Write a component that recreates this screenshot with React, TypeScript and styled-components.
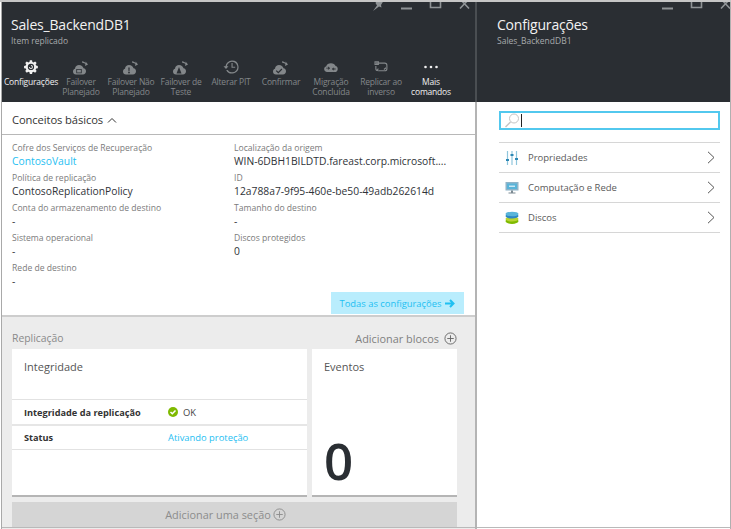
import React from "react";
import styled, { createGlobalStyle } from "styled-components";

const Global = createGlobalStyle`
  html, body { margin: 0; padding: 0; background: #fff; }
  body { font-family: "Open Sans", "Noto Sans", sans-serif; overflow: hidden; }
`;

const Page = styled.div`
  width: 731px; height: 529px; display: flex; position: relative; overflow: hidden;
  background: #fff;
`;
const TopLine = styled.div`
  position: absolute; left: 0; right: 0; top: 0; height: 2px; background: #c6c6c6;
`;
const Blade = styled.section<{ $w: number }>`
  width: ${p => p.$w}px; flex: none; height: 529px; display: flex; flex-direction: column;
  position: relative; box-sizing: border-box;
`;
const LeftBlade = styled(Blade)`
  margin-left: 1px; border-left: 1px solid #a9a9a9; border-right: 2px solid #b4b4b4;
`;
const RightBlade = styled(Blade)`
  border-right: 1px solid #b0b0b0;
`;
const Header = styled.header<{ $edge?: boolean }>`
  height: 102px; flex: none; background: #2a2e33; color: #fff; box-sizing: border-box;
  padding-top: 16px; position: relative;
  ${p => p.$edge && "margin-right: -2px; border-right: 2px solid #4a4e52;"}
`;
const Title = styled.h1<{ $l: number }>`
  margin: 0 0 0 ${p => p.$l}px; font-size: 14px; line-height: 18px; font-weight: 400; color: #f2f2f2;
  letter-spacing: -0.2px;
`;
const Sub = styled.div<{ $l: number }>`
  margin: 1px 0 0 ${p => p.$l}px; font-size: 8.5px; line-height: 12px; color: #a7aaac;
`;
const Commands = styled.div`
  display: grid; grid-template-columns: repeat(9, 50px); margin: 11px 0 0 4px;
`;
const Cmd = styled.div<{ $on?: boolean }>`
  display: flex; flex-direction: column; align-items: center;
  color: ${p => (p.$on ? "#f0f0f0" : "#83878a")};
  font-size: 8.5px; line-height: 10px; letter-spacing: -0.2px; text-align: center; white-space: nowrap;
`;
const CmdIcon = styled.svg`
  width: 18px; height: 18px; display: block; margin-bottom: 1px; fill: currentColor;
`;
const WinButtons = styled.div<{ $r: number }>`
  position: absolute; top: 0; right: ${p => p.$r}px; display: flex; gap: 14px; align-items: flex-start;
  color: #8f9396;
`;
const WinIcon = styled.svg`
  display: block; width: 15px; height: 12px; fill: none; stroke: currentColor; stroke-width: 1.6;
`;

const Basics = styled.div`
  height: 33px; flex: none; box-sizing: border-box; border-bottom: 1px solid #b8b8b8;
  padding: 10px 0 0 10px; font-size: 11.2px; line-height: 16px; color: #333; letter-spacing: -0.1px;
  display: flex; align-items: flex-start; gap: 4px;
`;
const Info = styled.div`
  display: grid; grid-template-columns: 222px 1fr; grid-auto-rows: 30px; padding: 6px 0 0 10px; height: 150px;
  box-sizing: border-box;
`;
const Field = styled.div`
  min-width: 0;
`;
const Label = styled.div`
  font-size: 8.6px; line-height: 14px; color: #7b7b7b; white-space: nowrap;
`;
const Value = styled.div<{ $link?: boolean }>`
  margin-top: -1px;
  font-size: 10.3px; line-height: 14px; color: ${p => (p.$link ? "#1fc0f2" : "#2f3338")}; white-space: nowrap;
`;
const AllRow = styled.div`
  display: flex; justify-content: flex-end; padding: 0 11px 0 0; height: 23px; flex: none;
  border-bottom: 2px solid #cdcdcd; margin-top: 7px;
`;
const AllBtn = styled.div`
  width: 133px; height: 22px; background: #b9edfd; color: #1fc0f2; font-size: 9.4px;
  display: flex; align-items: center; justify-content: center; gap: 4px; white-space: nowrap;
`;
const Lower = styled.div`
  flex: 1; background: #ececec; padding: 0 18px 0 10px; display: flex; flex-direction: column; min-height: 0;
`;
const LowerHead = styled.div`
  height: 32px; flex: none; display: flex; align-items: center; justify-content: space-between;
  padding-top: 10px; box-sizing: border-box;
`;
const SectionName = styled.span`
  font-size: 10.4px; color: #8a8a8a;
`;
const AddLink = styled.span`
  font-size: 10.9px; color: #7f7f7f; display: flex; align-items: center; gap: 5px;
`;
const Cards = styled.div`
  display: grid; grid-template-columns: 295px 145px; gap: 5px; height: 148px; flex: none;
`;
const Card = styled.div`
  background: #fff; border-bottom: 2px solid #b5b5b5; box-sizing: border-box; position: relative;
  display: flex; flex-direction: column;
`;
const CardTitle = styled.div<{ $l: number }>`
  height: 50px; box-sizing: border-box; padding: 9px 0 0 ${p => p.$l}px; font-size: 11px; line-height: 18px; color: #555;
  flex: none;
`;
const HealthRow = styled.div`
  display: grid; grid-template-columns: 144px 1fr; align-items: center; height: 24px; padding-left: 12px;
  border-top: 1px solid #e2e2e2; font-size: 9.2px; color: #333;
  & + & { border-top: 2px solid #e6e6e6; height: 23px; }
  &:last-of-type { border-bottom: 1px solid #e2e2e2; }
`;
const RowKey = styled.b`
  font-weight: 700;
`;
const RowVal = styled.span<{ $link?: boolean }>`
  display: flex; align-items: center; gap: 5px; font-size: 9.4px; color: ${p => (p.$link ? "#1fc0f2" : "#444")};
`;
const BigZero = styled.div`
  position: absolute; left: 12px; bottom: 5px; font-size: 51px; line-height: 60px; color: #2a2e33; font-weight: 600;
`;
const AddSection = styled.div`
  margin-top: 5px; height: 25px; flex: none; background: #d5d5d5; color: #8c8c8c; font-size: 10.9px;
  display: flex; align-items: center; justify-content: center; gap: 2px; padding-right: 18px;
`;
const BottomLine = styled.div`
  position: absolute; left: 0; right: 0; bottom: 1px; height: 1px; background: #b9b9b9;
`;

const Search = styled.div`
  margin: 9px 10px 0 22px; height: 19px; box-sizing: border-box; border: 2px solid #52c8ee;
  display: flex; align-items: center; padding-left: 3px; gap: 1px;
`;
const Caret = styled.i`
  display: block; width: 1px; height: 13px; background: #222;
`;
const List = styled.div`
  margin: 12px 10px 0 22px; border-top: 1px solid #d6d6d6;
`;
const Item = styled.div`
  height: 30px; box-sizing: border-box; border-bottom: 1px solid #d6d6d6; display: flex; align-items: center;
  padding: 0 5px 0 6px; font-size: 9.5px; color: #5a5a5a;
`;
const ItemIcon = styled.svg`
  width: 14px; height: 14px; flex: none; margin-right: 9px;
`;
const ItemText = styled.span`
  flex: 1;
`;

const Chevron = () => (
  <svg width="8" height="13" viewBox="0 0 8 13" fill="none" stroke="#555" strokeWidth="1">
    <path d="M1 .8 7 6.500 1 12.200" />
  </svg>
);
const Plus = ({ s, c }: { s: number; c: string }) => (
  <svg width={s} height={s} viewBox="0 0 14 14" fill="none" stroke={c} strokeWidth="1">
    <circle cx="7" cy="7" r="6" />
    <path d="M3.500 7h7M7 3.500v7" />
  </svg>
);

const arrow = "M10 3.200c1.800.2 3 .8 3.600 2V3.500l2.400 2.900-3 1.500.4-1.600c-.8-1-1.800-1.400-3.200-1.500z";
const cloud = "M4 16.500c-1.800 0-3-1.300-3-3 0-1.400.8-2.500 2-2.800C3.200 8.300 5 7 7 7c2.300 0 4 1.300 4.500 3.200 1.500.1 2.500 1.300 2.500 3 0 1.800-1.300 3.300-3 3.300z";

const icons: React.ReactNode[] = [
  <g key="g" transform="translate(1.300 1.300) scale(.85)">
    <path fillRule="evenodd" d="M7.700 1h2.600l.4 2.100 1.300.6L13.900 2.500l1.800 1.800-1.200 1.800.6 1.300 2 .4v2.600l-2 .4-.6 1.300 1.200 1.800-1.800 1.800-1.900-1.200-1.300.6-.4 2.100H7.700l-.4-2.100-1.300-.6-1.900 1.200-1.800-1.800 1.200-1.800-.6-1.300-2-.4V7.800l2-.4.6-1.300-1.200-1.800 1.800-1.800L6 3.700l1.300-.6zM9 5.300a3.700 3.700 0 1 0 0 7.400 3.700 3.700 0 0 0 0-7.400z" />
    <path d="M9 6.700a2.300 2.300 0 1 1-2.300 2.300h1.100A1.200 1.200 0 1 0 9 7.800z" />
  </g>,
  <g key="a">
    <path d={arrow} />
    <path fillRule="evenodd" d={cloud + "M4.300 10.900h5.400v4.400H4.300zM5.100 11.700h3.800v2.800H5.100z"} />
  </g>,
  <g key="b">
    <path d={arrow} />
    <path fillRule="evenodd" d={cloud + "M6.300 9.500 6.500 13h1l.2-3.500zM7 13.600a.9.900 0 1 0 0 1.800.9.900 0 0 0 0-1.800z"} />
  </g>,
  <g key="c">
    <path d={arrow} />
    <path fillRule="evenodd" d={cloud + "M7 9 4.500 15.500h5z"} />
  </g>,
  <g key="d">
    <path fillRule="evenodd" d="M10 2.500a6.500 6.500 0 1 1-5.800 9.400h1.400A5.300 5.300 0 1 0 4.800 8.300h1.700L4 11 1.500 8.300h2A6.500 6.500 0 0 1 10 2.500zM9.500 5h1.100v3.700h2.600v1.100H9.500z" />
  </g>,
  <g key="e">
    <path d={arrow} />
    <path fillRule="evenodd" d={cloud + "M4.600 12.300l-.8.800L6.300 15.400l4-4-.8-.8-3.200 3.200z"} />
  </g>,
  <g key="f" transform="translate(1.300 1.300) scale(.85)">
    <path fillRule="evenodd" d="M4.500 15C2.500 15 1 13.500 1 11.500 1 9.900 2 8.600 3.500 8.200 4 6 6.200 4.500 9 4.500c2.700 0 4.800 1.400 5.500 3.500C16 8.300 17 9.700 17 11.300c0 2-1.500 3.700-3.500 3.700zM3.500 10l2.600 0-1-1.100H6.300L8 10.500 6.300 12H5.100l1-1.100H3.500zM14.500 10.900h-2.600l1-1H11.700L10 11.500 11.700 13h1.200l-1-1.100h2.600z" />
  </g>,
  <g key="h" fill="none" stroke="currentColor" strokeWidth="1.300" transform="translate(1.300 1.300) scale(.85)">
    <path d="M3 4.500h10.500c1.500 0 2.500 1 2.500 2.500v4c0 1.500-1 2.500-2.500 2.500H6" />
    <path d="M2 3h4v3H2zM3 8v3.500c0 1 1 2 3 2" />
    <path d="M12.500 12 15 10M6 11l-2 2.500" />
  </g>,
  <g key="m">
    <circle cx="3.500" cy="9" r="1.300" />
    <circle cx="9" cy="9" r="1.300" />
    <circle cx="14.500" cy="9" r="1.300" />
  </g>,
];

const commands: { lines: string[]; on?: boolean }[] = [
  { lines: ["Configurações"], on: true },
  { lines: ["Failover", "Planejado"] },
  { lines: ["Failover Não", "Planejado"] },
  { lines: ["Failover de", "Teste"] },
  { lines: ["Alterar PIT"] },
  { lines: ["Confirmar"] },
  { lines: ["Migração", "Concluída"] },
  { lines: ["Replicar ao", "inverso"] },
  { lines: ["Mais", "comandos"], on: true },
];

const fields: [string, string, boolean?][] = [
  ["Cofre dos Serviços de Recuperação", "ContosoVault", true],
  ["Localização da origem", "WIN-6DBH1BILDTD.fareast.corp.microsoft...."],
  ["Política de replicação", "ContosoReplicationPolicy"],
  ["ID", "12a788a7-9f95-460e-be50-49adb262614d"],
  ["Conta do armazenamento de destino", "-"],
  ["Tamanho do destino", "-"],
  ["Sistema operacional", "-"],
  ["Discos protegidos", "0"],
  ["Rede de destino", "-"],
];

const WindowIcons = ({ pin, right }: { pin?: boolean; right: number }) => (
  <WinButtons $r={right}>
    {pin && (
      <WinIcon viewBox="0 0 15 12" style={{ fill: "currentColor", stroke: "none" }}>
        <path d="M7 0h7L11 5l.5 2.500-2.500-1L3 11l4-5.500-1.500-2.500z" />
      </WinIcon>
    )}
    <WinIcon viewBox="0 0 15 12"><path d="M2 8.500h11" strokeWidth="2" /></WinIcon>
    <WinIcon viewBox="0 0 15 12"><path d="M2.500-2v9.500h10V-2" /></WinIcon>
    <WinIcon viewBox="0 0 15 12"><path d="M3-1 12 8.500M12-1 3 8.500" /></WinIcon>
  </WinButtons>
);

export default function App() {
  return (
    <Page>
      <Global />
      <LeftBlade $w={476}>
        <Header $edge>
          <Title $l={9}>Sales_BackendDB1</Title>
          <Sub $l={9}>Item replicado</Sub>
          <Commands>
            {commands.map((c, i) => (
              <Cmd key={i} $on={c.on}>
                <CmdIcon viewBox="0 0 18 18">{icons[i]}</CmdIcon>
                {c.lines.map(l => <span key={l}>{l}</span>)}
              </Cmd>
            ))}
          </Commands>
          <WindowIcons pin right={3} />
        </Header>
        <Basics>
          Conceitos básicos
          <svg width="10" height="16" viewBox="0 0 10 16" fill="none" stroke="#333" strokeWidth="1"><path d="M1 10.500 5 6.500l4 4" /></svg>
        </Basics>
        <Info>
          {fields.map(([l, v, link]) => (
            <Field key={l}>
              <Label>{l}</Label>
              <Value $link={link}>{v}</Value>
            </Field>
          ))}
        </Info>
        <AllRow>
          <AllBtn>
            Todas as configurações
            <svg width="10" height="9" viewBox="0 0 10 9" fill="none" stroke="#1fc0f2" strokeWidth="2"><path d="M0 4.500h8M5 1l3.500 3.500L5 8" /></svg>
          </AllBtn>
        </AllRow>
        <Lower>
          <LowerHead>
            <SectionName>Replicação</SectionName>
            <AddLink>Adicionar blocos <Plus s={13} c="#666" /></AddLink>
          </LowerHead>
          <Cards>
            <Card>
              <CardTitle $l={12}>Integridade</CardTitle>
              <HealthRow>
                <RowKey>Integridade da replicação</RowKey>
                <RowVal>
                  <svg width="10" height="10" viewBox="0 0 10 10"><circle cx="5" cy="5" r="5" fill="#7fba00" /><path d="M2.500 5 4.300 6.800 7.500 3.500" fill="none" stroke="#fff" strokeWidth="1.500" /></svg>
                  OK
                </RowVal>
              </HealthRow>
              <HealthRow>
                <RowKey>Status</RowKey>
                <RowVal $link>Ativando proteção</RowVal>
              </HealthRow>
            </Card>
            <Card>
              <CardTitle $l={12}>Eventos</CardTitle>
              <BigZero>0</BigZero>
            </Card>
          </Cards>
          <AddSection>Adicionar uma seção <Plus s={13} c="#8c8c8c" /></AddSection>
        </Lower>
        <BottomLine />
      </LeftBlade>
      <RightBlade $w={254}>
        <Header>
          <Title $l={20}>Configurações</Title>
          <Sub $l={20}>Sales_BackendDB1</Sub>
          <WindowIcons right={-3} />
        </Header>
        <Search>
          <svg width="16" height="15" viewBox="0 0 16 15" fill="none" stroke="#c4c4c4" strokeWidth="1">
            <circle cx="10" cy="5.500" r="4.500" />
            <path d="M6.500 9 1.500 14" strokeWidth="1.500" />
          </svg>
          <Caret />
        </Search>
        <List>
          <Item>
            <ItemIcon viewBox="0 0 14 14">
              <path d="M2.500 0v14M7 0v14M11.500 0v14" stroke="#8fc6dc" strokeWidth="1.200" />
              <path d="M1 9h3M5.500 4h3M10 8h3" stroke="#2d87b4" strokeWidth="1.800" />
            </ItemIcon>
            <ItemText>Propriedades</ItemText>
            <Chevron />
          </Item>
          <Item>
            <ItemIcon viewBox="0 0 14 14">
              <rect x="0.500" y="1" width="13" height="8.500" fill="#8fb4c8" />
              <rect x="2" y="2.500" width="10" height="5.500" fill="#59b4d9" />
              <path d="M4 5.200h6" stroke="#e5f4fa" strokeWidth="1.200" />
              <path d="M6 9.500h2v2H6zM3.500 11.500h7v1h-7z" fill="#7c8a92" />
            </ItemIcon>
            <ItemText>Computação e Rede</ItemText>
            <Chevron />
          </Item>
          <Item>
            <ItemIcon viewBox="0 0 14 14">
              <ellipse cx="7" cy="10" rx="6.500" ry="3" fill="#7fba00" />
              <ellipse cx="7" cy="8" rx="6.500" ry="2.500" fill="#b8d432" />
              <ellipse cx="7" cy="5" rx="6.500" ry="2.500" fill="#2d87c4" />
              <ellipse cx="7" cy="3" rx="6.500" ry="2.300" fill="#59b4d9" />
            </ItemIcon>
            <ItemText>Discos</ItemText>
            <Chevron />
          </Item>
        </List>
        <BottomLine />
      </RightBlade>
      <TopLine />
    </Page>
  );
}
